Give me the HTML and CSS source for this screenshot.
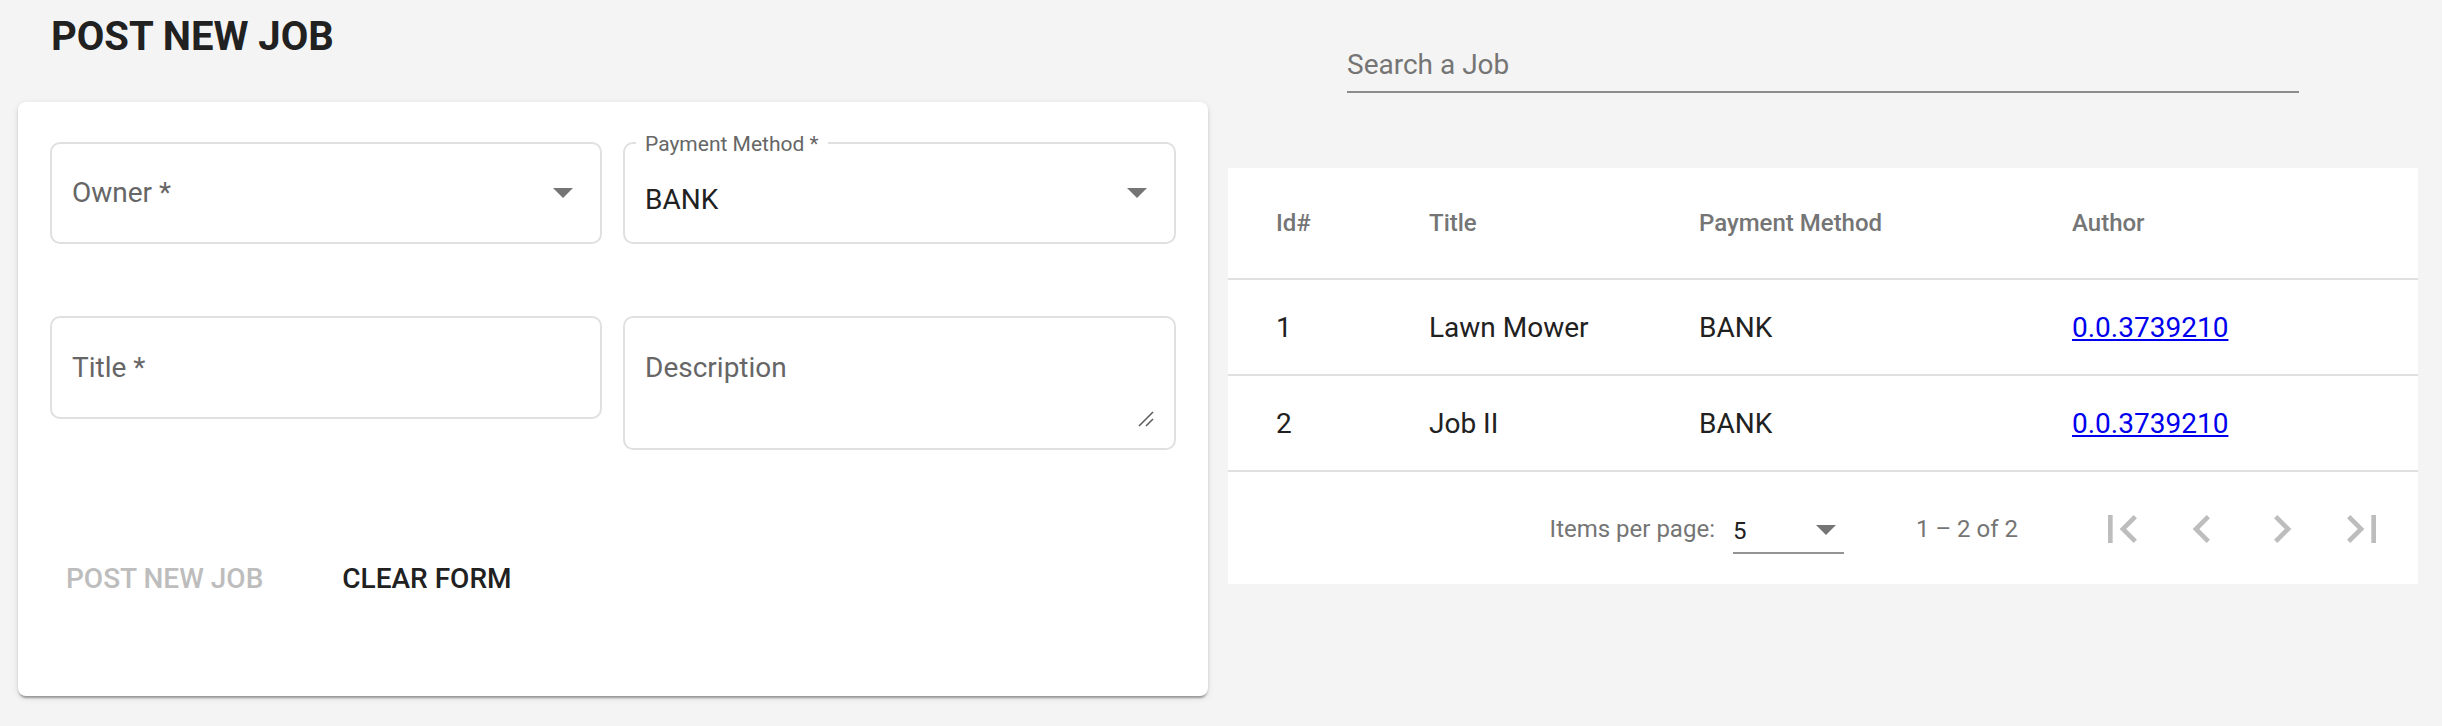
FILE: index.html
```html
<!DOCTYPE html>
<html lang="en">
<head>
<meta charset="utf-8">
<title>Jobs</title>
<link rel="stylesheet" href="styles.css">
</head>
<body>
<div class="page">
  <section class="left">
    <h2 class="page-title">POST NEW JOB</h2>
    <div class="card">
      <div class="form-row row-top">
        <div class="field select-field">
          <span class="placeholder">Owner *</span>
          <span class="arrow"></span>
        </div>
        <div class="field select-field">
          <span class="float-label">Payment Method *</span>
          <span class="value">BANK</span>
          <span class="arrow"></span>
        </div>
      </div>
      <div class="form-row row-bottom">
        <div class="field text-field">
          <span class="placeholder">Title *</span>
        </div>
        <div class="field textarea-field">
          <span class="placeholder">Description</span>
          <svg class="grip" width="16" height="16" viewBox="0 0 16 16"><line x1="1" y1="15" x2="15" y2="1" stroke="#5f5f5f" stroke-width="1.6"/><line x1="8" y1="15" x2="15" y2="8" stroke="#5f5f5f" stroke-width="1.6"/></svg>
        </div>
      </div>
      <div class="actions">
        <button class="btn btn-disabled" type="button">POST NEW JOB</button>
        <button class="btn" type="button">CLEAR FORM</button>
      </div>
    </div>
  </section>
  <section class="right">
    <div class="search">
      <input class="search-input" type="text" placeholder="Search a Job">
    </div>
    <div class="table-card">
      <table class="jobs">
        <colgroup>
          <col class="c-id"><col class="c-title"><col class="c-pay"><col class="c-author">
        </colgroup>
        <thead>
          <tr class="head-row"><th class="first">Id#</th><th>Title</th><th>Payment Method</th><th>Author</th></tr>
        </thead>
        <tbody>
          <tr class="body-row"><td class="first">1</td><td>Lawn Mower</td><td>BANK</td><td><a href="#">0.0.3739210</a></td></tr>
          <tr class="body-row"><td class="first">2</td><td>Job II</td><td>BANK</td><td><a href="#">0.0.3739210</a></td></tr>
        </tbody>
      </table>
      <div class="paginator">
        <span class="pg-label">Items per page:</span>
        <div class="pg-select"><span class="pg-value">5</span><span class="pg-arrow"></span></div>
        <span class="pg-range">1 – 2 of 2</span>
        <button class="pg-btn" type="button"><svg viewBox="0 0 24 24" width="56" height="56"><path d="M18.41 16.59L13.82 12l4.590-4.59L17 6l-6 6 6 6zM6 6h2v12H6z"/></svg></button>
        <button class="pg-btn" type="button"><svg viewBox="0 0 24 24" width="56" height="56"><path d="M15.41 7.41L14 6l-6 6 6 6 1.41-1.41L10.83 12z"/></svg></button>
        <button class="pg-btn" type="button"><svg viewBox="0 0 24 24" width="56" height="56"><path d="M10 6L8.59 7.41 13.17 12l-4.58 4.59L10 18l6-6z"/></svg></button>
        <button class="pg-btn" type="button"><svg viewBox="0 0 24 24" width="56" height="56"><path d="M5.59 7.41L10.18 12l-4.59 4.59L7 18l6-6-6-6zM16 6h2v12h-2z"/></svg></button>
      </div>
    </div>
  </section>
</div>
</body>
</html>
```

FILE: styles.css
```css
* { box-sizing: border-box; }

html, body {
  margin: 0;
  padding: 0;
  background: #f4f4f4;
  font-family: Roboto, "Liberation Sans", Arial, sans-serif;
  color: #212121;
}

.page {
  display: grid;
  grid-template-columns: 1190px 1190px;
  column-gap: 20px;
  padding: 0 24px 0 18px;
  height: 726px;
}

/* ---------- left ---------- */
.page-title {
  margin: 0;
  padding: 17px 0 0 33px;
  font-size: 40px;
  line-height: 40px;
  font-weight: 700;
  color: #212121;
}

.card {
  margin-top: 45px;
  height: 594px;
  background: #fff;
  border-radius: 8px;
  padding: 40px 32px 0;
  box-shadow: 0 4px 2px -2px rgba(0,0,0,.2), 0 2px 2px 0 rgba(0,0,0,.14), 0 2px 6px 0 rgba(0,0,0,.12);
}

.form-row {
  display: grid;
  grid-template-columns: 552px 553px;
  column-gap: 21px;
  align-items: start;
}

.row-bottom { margin-top: 72px; }

.field {
  position: relative;
  border: 2px solid #e0e0e0;
  border-radius: 10px;
  background: #fff;
  font-size: 28px;
  line-height: 28px;
}

.select-field {
  height: 102px;
  display: flex;
  align-items: center;
  padding: 0 27px 0 20px;
}

.text-field {
  height: 103px;
  display: flex;
  align-items: center;
  padding: 0 20px;
}

.textarea-field {
  height: 134px;
  padding: 36px 20px 0;
}

.placeholder { color: #666; }

.value {
  color: #212121;
  margin-top: 14px;
}

.arrow {
  margin-left: auto;
  width: 0;
  height: 0;
  border-left: 10px solid transparent;
  border-right: 10px solid transparent;
  border-top: 10px solid #757575;
}

.float-label {
  position: absolute;
  top: -10px;
  left: 11px;
  padding: 0 9px;
  background: #fff;
  font-size: 21px;
  line-height: 21px;
  color: #666;
}

.grip {
  position: absolute;
  right: 20px;
  bottom: 21px;
}

.actions {
  margin-top: 92px;
  padding-left: 0;
  display: flex;
  gap: 47px;
}

.btn {
  height: 72px;
  padding: 0 16px;
  border: none;
  background: transparent;
  font-family: Roboto, "Liberation Sans", Arial, sans-serif;
  font-size: 28px;
  font-weight: 500;
  color: #212121;
  cursor: pointer;
}

.btn-disabled { color: #bdbdbd; cursor: default; }

/* ---------- right ---------- */
.right { padding-top: 50px; }

.search {
  width: 952px;
  margin: 0 auto;
}

.search-input {
  display: block;
  width: 100%;
  height: 43px;
  padding: 0 0 13px;
  border: none;
  border-bottom: 2px solid #8c8c8c;
  background: transparent;
  outline: none;
  font-family: Roboto, "Liberation Sans", Arial, sans-serif;
  font-size: 28px;
  line-height: 28px;
  color: #212121;
}

.search-input::placeholder { color: #757575; }

.table-card {
  margin-top: 75px;
  background: #fff;
}

.jobs {
  width: 100%;
  table-layout: fixed;
  border-collapse: separate;
  border-spacing: 0;
}

.c-id { width: 201px; }
.c-title { width: 270px; }
.c-pay { width: 373px; }
.c-author { width: 346px; }

.jobs th, .jobs td {
  padding: 0;
  text-align: left;
  vertical-align: middle;
  border-bottom: 2px solid #e0e0e0;
}

.jobs .first { padding-left: 48px; }

.head-row { height: 112px; }
.body-row { height: 96px; }

.jobs th {
  font-size: 24px;
  font-weight: 500;
  color: #757575;
}

.jobs td {
  font-size: 28px;
  color: #212121;
}

.jobs a { color: #0000ee; text-decoration: underline; }

.paginator {
  height: 112px;
  display: flex;
  align-items: center;
  justify-content: flex-end;
  padding: 2px 16px 0 0;
  font-size: 24px;
  line-height: 24px;
  color: #757575;
}

.pg-label { margin-right: 18px; }

.pg-select {
  width: 111px;
  height: 35px;
  margin-top: 15px;
  display: flex;
  align-items: flex-start;
  padding: 0 8px 0 0;
  border-bottom: 2px solid #949494;
  color: #212121;
}

.pg-value { line-height: 24px; }

.pg-arrow {
  margin: 6px 0 0 auto;
  width: 0;
  height: 0;
  border-left: 10px solid transparent;
  border-right: 10px solid transparent;
  border-top: 10px solid #757575;
}

.pg-range { margin: 0 64px 0 72px; }

.pg-btn {
  width: 80px;
  height: 80px;
  padding: 0;
  border: none;
  background: transparent;
  display: flex;
  align-items: center;
  justify-content: center;
}

.pg-btn svg { fill: #bdbdbd; display: block; }
```
